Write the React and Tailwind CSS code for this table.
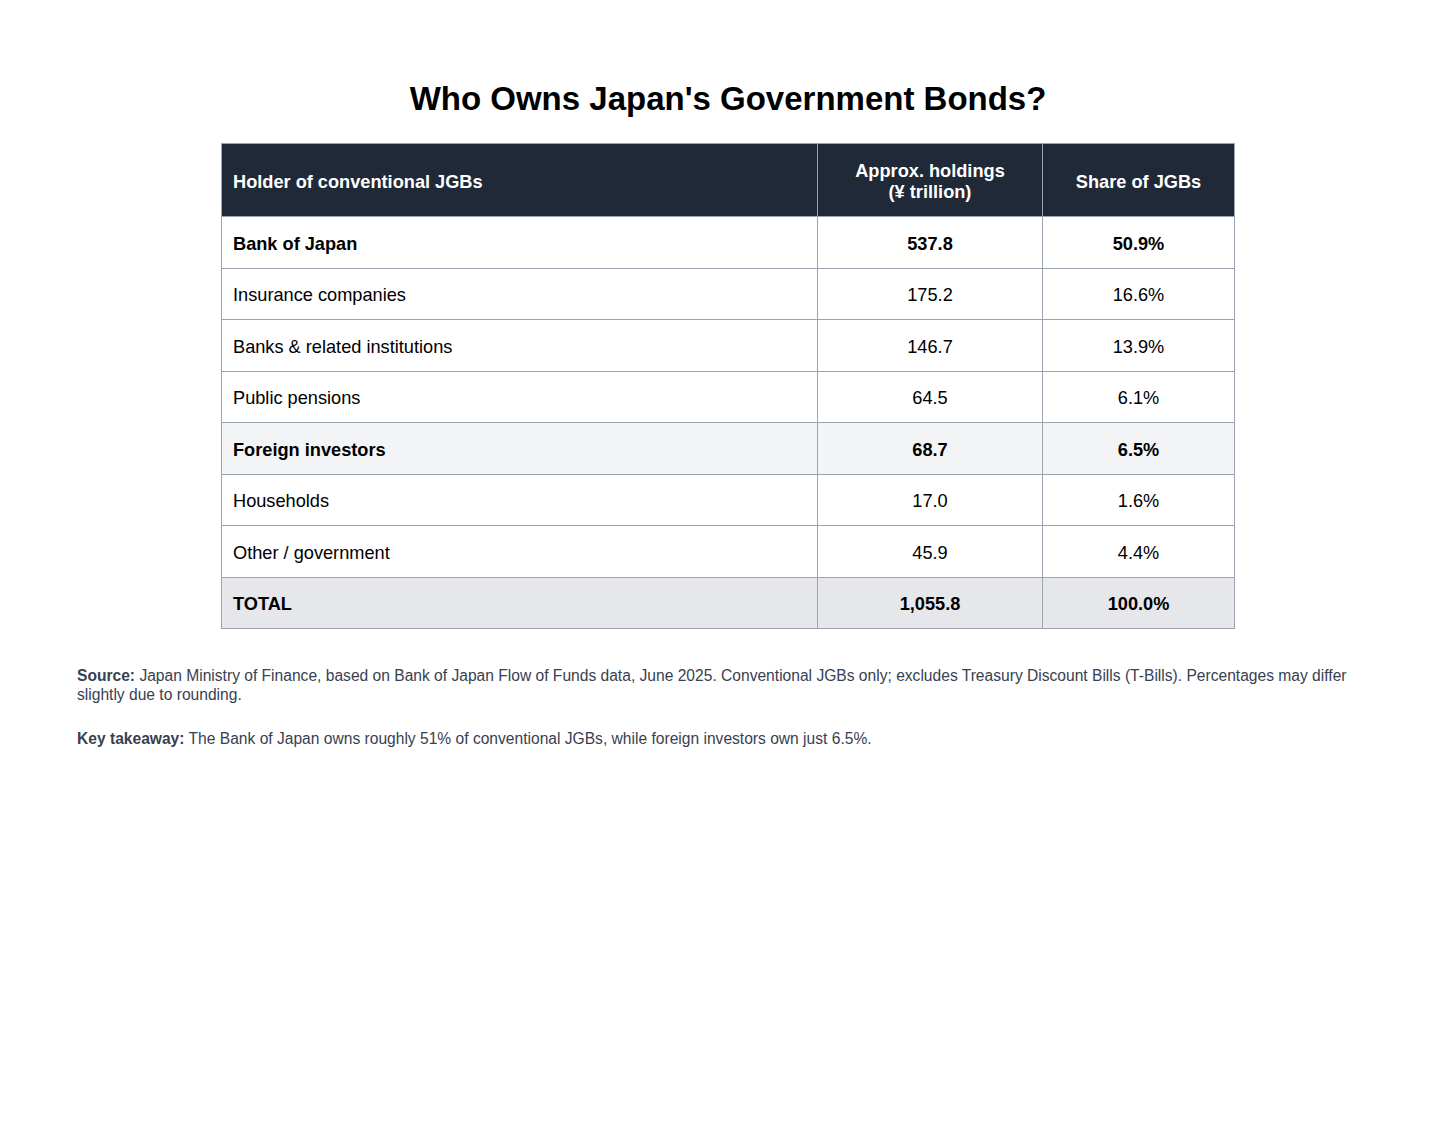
const rows = [
  { holder: "Bank of Japan", amount: "537.8", share: "50.9%", bold: true },
  { holder: "Insurance companies", amount: "175.2", share: "16.6%" },
  { holder: "Banks & related institutions", amount: "146.7", share: "13.9%" },
  { holder: "Public pensions", amount: "64.5", share: "6.1%" },
  { holder: "Foreign investors", amount: "68.7", share: "6.5%", bold: true, shade: "bg-[#f3f4f6]" },
  { holder: "Households", amount: "17.0", share: "1.6%" },
  { holder: "Other / government", amount: "45.9", share: "4.4%" },
  { holder: "TOTAL", amount: "1,055.8", share: "100.0%", bold: true, shade: "bg-[#e5e7eb]" },
];

export default function App() {
  return (
    <div className="min-h-[1125px] bg-white px-[77px] pt-[79px] font-['Liberation_Sans',Arial,sans-serif] text-black">
      <h1 className="text-center text-[33px] font-bold leading-[40px]">
        Who Owns Japan's Government Bonds?
      </h1>

      {/* table */}
      <table className="mx-auto mt-[24px] w-[1014px] border-collapse text-[18.2px] leading-[21px]">
        <thead>
          <tr className="h-[73px] bg-[#1f2937] text-white">
            <th className="w-[596px] border border-[#9ca3af] px-[11px] pt-[4px] text-left font-bold">
              Holder of conventional JGBs
            </th>
            <th className="w-[225px] border border-[#9ca3af] px-[11px] pt-[4px] text-center font-bold">
              Approx. holdings
              <br />
              (¥ trillion)
            </th>
            <th className="border border-[#9ca3af] px-[11px] pt-[4px] text-center font-bold">
              Share of JGBs
            </th>
          </tr>
        </thead>
        <tbody>
          {rows.map((r) => (
            <tr
              key={r.holder}
              className={`h-[51.5px] ${r.shade || "bg-white"} ${r.bold ? "font-bold" : ""}`}
            >
              <td className="border border-[#9ca3af] px-[11px] pt-[4px]">{r.holder}</td>
              <td className="border border-[#9ca3af] px-[11px] pt-[4px] text-center">{r.amount}</td>
              <td className="border border-[#9ca3af] px-[11px] pt-[4px] text-center">{r.share}</td>
            </tr>
          ))}
        </tbody>
      </table>

      <div className="mt-[37px] text-[15.6px] leading-[19px] text-[#374151]">
        <p>
          <span className="font-bold">Source:</span> Japan Ministry of Finance, based on Bank of
          Japan Flow of Funds data, June 2025. Conventional JGBs only; excludes Treasury Discount
          Bills (T-Bills). Percentages may differ slightly due to rounding.
        </p>
        <p className="mt-[25px]">
          <span className="font-bold">Key takeaway:</span> The Bank of Japan owns roughly 51% of
          conventional JGBs, while foreign investors own just 6.5%.
        </p>
      </div>
    </div>
  );
}
